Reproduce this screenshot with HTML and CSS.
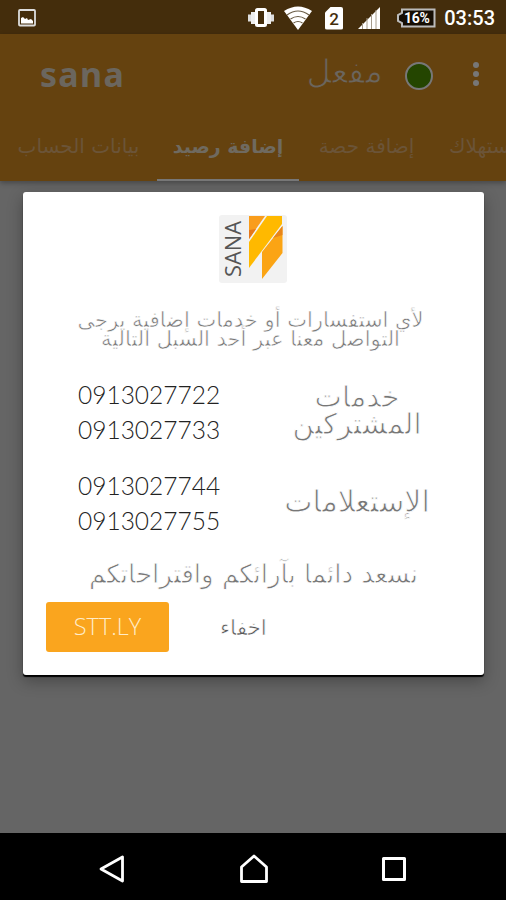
FILE: index.html
```html
<!DOCTYPE html>
<html lang="ar">
<head>
    <meta charset="UTF-8">
    <meta name="viewport" content="width=device-width, initial-scale=1.0">
    <title>sana</title>
    <link rel="stylesheet" href="styles.css">
</head>
<body>
    <div class="status-bar">
        <svg class="icon-picture" width="20" height="20" viewBox="0 0 20 20">
            <rect x="2" y="2" width="16" height="15.5" rx="1" fill="none" stroke="#ddd" stroke-width="1.8"/>
            <path d="M4 15.500V10l2-1 2 2 2-1 1 2 3-1 2 2v2.500z" fill="#fff"/>
        </svg>
        <svg width="28" height="20" viewBox="0 0 28 20">
            <rect x="9.500" y="1.500" width="9" height="16" rx="1" fill="none" stroke="#fff" stroke-width="3"/>
            <path d="M6 4v12M22 4v12" stroke="#eee" stroke-width="4"/>
            <path d="M2.500 6.500v7M25.500 6.500v7" stroke="#ddd" stroke-width="3"/>
        </svg>
        <svg class="icon-wifi" width="28" height="24" viewBox="0 0 28 24">
            <path d="M0 5Q14-4 28 5L14 24z" fill="#fff"/>
            <path d="M3 9Q14 1 25 9M6.500 13Q14 8 21.500 13M9.500 17Q14 14 18.500 17" fill="none" stroke="#685b45" stroke-width="1.100"/>
        </svg>
        <span class="sim">2</span>
        <svg class="icon-signal" width="22" height="22" viewBox="0 0 22 22">
            <path d="M0 22L22 0v22z" fill="#fff"/>
            <path d="M4.500 16v6M9 11v11M13.500 7v15M18 3v19" stroke="#a59c8c" stroke-width="1"/>
        </svg>
        <div class="battery">
            <svg width="40" height="20" viewBox="0 0 40 20">
                <path d="M6 1.500h32.500v17H6V15L2 13V7l4-2z" fill="#160e04" stroke="#bbb" stroke-width="2"/>
            </svg>
            <span>16%</span>
        </div>
        <div class="clock">03:53</div>
    </div>

    <div class="app-bar">
        <div class="toolbar">
            <h1 class="title">sana</h1>
            <span class="state" dir="rtl">مفعل</span>
            <span class="dot"></span>
            <span class="menu"><i></i><i></i><i></i></span>
        </div>
        <div class="tabs">
            <div class="tab tab-account"><span dir="rtl">بيانات الحساب</span></div>
            <div class="tab tab-balance active"><span dir="rtl">إضافة رصيد</span></div>
            <div class="tab tab-quota"><span dir="rtl">إضافة حصة</span></div>
            <div class="tab tab-usage"><span dir="rtl">استهلاك</span></div>
        </div>
    </div>

    <div class="content">
        <div class="dialog">
            <svg class="logo" width="68" height="68" viewBox="0 0 68 68">
                <rect width="68" height="68" rx="3" fill="#f2f2f2"/>
                <path d="M30 1h16L30 24z" fill="#f99d1c"/>
                <path d="M30 15v9l7-10z" fill="#e5781c"/>
                <path d="M48 1h15v8L30 53V27z" fill="#ffb900"/>
                <path d="M63.500 11v27L43 64V37z" fill="#fba414"/>
                <path d="M63.500 11v9L54 23z" fill="#e88518"/>
                <text class="logo-text" transform="translate(22 62) rotate(-90)" textLength="56" lengthAdjust="spacingAndGlyphs">SANA</text>
            </svg>
            <p class="message" dir="rtl">
                <span>لأي استفسارات أو خدمات إضافية يرجى</span><br>
                <span>التواصل معنا عبر أحد السبل التالية</span>
            </p>
            <div class="contact">
                <div class="phones">0913027722<br>0913027733</div>
                <div class="label label-services" dir="rtl"><span>خدمات</span><br><span>المشتركين</span></div>
            </div>
            <div class="contact contact-info">
                <div class="phones">0913027744<br>0913027755</div>
                <div class="label" dir="rtl"><span>الإستعلامات</span></div>
            </div>
            <p class="thanks" dir="rtl"><span>نسعد دائما بآرائكم واقتراحاتكم</span></p>
            <div class="actions">
                <button class="site-btn">STT.LY</button>
                <button class="hide-btn" dir="rtl">اخفاء</button>
            </div>
        </div>
    </div>

    <div class="nav-bar">
        <svg width="28" height="30" viewBox="0 0 28 30">
            <path d="M24.500 3v24L3 15z" fill="none" stroke="#fff" stroke-width="2.800" stroke-linejoin="round"/>
        </svg>
        <svg width="30" height="30" viewBox="0 0 30 30">
            <path d="M2.500 27.500V13L15 2l12.500 11v14.500z" fill="none" stroke="#fff" stroke-width="2.800" stroke-linejoin="round"/>
        </svg>
        <svg width="26" height="26" viewBox="0 0 26 26">
            <rect x="2.500" y="2.500" width="21" height="21" fill="none" stroke="#fff" stroke-width="3" stroke-linejoin="round"/>
        </svg>
    </div>
</body>
</html>
```
FILE: styles.css
```css
* {
    margin: 0;
    padding: 0;
    box-sizing: border-box;
}

body {
    width: 506px;
    height: 900px;
    display: flex;
    flex-direction: column;
    overflow: hidden;
    background: #656565;
    font-family: "DejaVu Sans", sans-serif;
}

svg {
    display: block;
    flex: none;
}

span {
    white-space: nowrap;
}

/* status bar */
.status-bar {
    height: 34px;
    flex: none;
    display: flex;
    align-items: center;
    padding: 2px 11px 0 17px;
    background: #442d0c;
    color: #fff;
    font-family: Roboto, sans-serif;
}

.icon-picture {
    margin-right: 210px;
}

.icon-wifi {
    margin-left: 9px;
}

.sim {
    width: 18px;
    height: 23px;
    margin-left: 13px;
    background: #fff;
    border-radius: 2px;
    clip-path: polygon(6px 0, 100% 0, 100% 100%, 0 100%, 0 6px);
    color: #442d0c;
    font-size: 17px;
    font-weight: 500;
    line-height: 24px;
    text-align: center;
}

.icon-signal {
    margin-left: 15px;
}

.battery {
    display: grid;
    margin-left: 16px;
    font-size: 14px;
    font-weight: 700;
    line-height: 20px;
}

.battery svg,
.battery span {
    grid-area: 1 / 1;
}

.battery span {
    padding-left: 8px;
    letter-spacing: -0.3px;
}

.clock {
    margin-left: auto;
    font-size: 20px;
    font-weight: 500;
}

/* app bar */
.app-bar {
    height: 147px;
    flex: none;
    background: #65420f;
    color: #6b665e;
    box-shadow: 0 2px 5px rgba(0, 0, 0, 0.3);
}

.toolbar {
    height: 83px;
    display: flex;
    align-items: center;
    padding: 0 25px 0 40px;
}

.title {
    width: 267px;
    font: 700 34px "Noto Sans", sans-serif;
    letter-spacing: 1.3px;
    line-height: 40px;
    padding-bottom: 3px;
}

.state {
    width: 76px;
    font-size: 33.5px;
    line-height: 40px;
    padding-bottom: 8px;
    -webkit-text-stroke: 1px #65420f;
}

.dot {
    width: 28px;
    height: 28px;
    margin: 1px 0 0 22px;
    border: 2px solid #777;
    border-radius: 50%;
    background: #244500;
}

.menu {
    margin-left: auto;
    margin-right: 2px;
    margin-bottom: 4px;
    display: flex;
    flex-direction: column;
    gap: 3px;
}

.menu i {
    width: 6px;
    height: 6px;
    border-radius: 50%;
    background: #777;
}

.tabs {
    height: 64px;
    display: flex;
    overflow: hidden;
}

.tab {
    flex: none;
    display: flex;
    justify-content: center;
    font-size: 20px;
    line-height: 58px;
    color: #6b5438;
}

.tab-account {
    width: 157px;
}

.tab-balance {
    width: 142px;
}

.tab-quota {
    width: 135px;
}

.tab-usage {
    padding-left: 15px;
}

.tab.active {
    color: #6f6a60;
    font-size: 19px;
    font-weight: 700;
    border-bottom: 2px solid #777;
}

/* dialog */
.content {
    flex: 1;
    padding: 11px 22px 0 23px;
}

.dialog {
    height: 483px;
    padding-top: 23px;
    background: #fff;
    border-radius: 3px;
    box-shadow: 0 2px 1px #000, 0 6px 16px rgba(0, 0, 0, 0.3);
    color: #777;
}

.logo {
    margin: 0 198px 0 196px;
}

.logo-text {
    font: 22px "Open Sans", sans-serif;
    fill: #555;
}

.message {
    margin-top: 28px;
    margin-right: 6px;
    text-align: center;
    font-size: 21px;
    line-height: 19px;
    color: #777;
    -webkit-text-stroke: 0.6px #fff;
}

.contact {
    height: 91px;
    margin-top: 28px;
    display: flex;
    padding-left: 55px;
}

.phones {
    width: 204px;
    font: 300 24.5px "Lato", sans-serif;
    line-height: 35px;
    color: #222;
}

.label {
    width: 150px;
    text-align: center;
    font-size: 30px;
    line-height: 27px;
    padding-top: 20px;
    -webkit-text-stroke: 0.9px #fff;
}

.label-services {
    font-size: 29px;
    padding-top: 7px;
}

.contact-info {
    margin-top: 0;
}

.thanks {
    text-align: center;
    font-size: 26px;
    line-height: 30px;
    -webkit-text-stroke: 0.8px #fff;
}

.actions {
    display: flex;
    align-items: center;
    margin-top: 13px;
    padding-left: 23px;
}

button {
    border: none;
    background: none;
    font-family: inherit;
}

.site-btn {
    width: 123px;
    height: 50px;
    padding-bottom: 3px;
    border-radius: 3px;
    background: #faa51e;
    color: #ffecc8;
    font: 300 23.5px "Open Sans", sans-serif;
}

.hide-btn {
    margin-left: 51px;
    color: #555;
    font-size: 21.5px;
    -webkit-text-stroke: 0.6px #fff;
}

/* navigation bar */
.nav-bar {
    height: 67px;
    flex: none;
    display: flex;
    align-items: center;
    justify-content: space-between;
    padding: 4px 99px 0 98px;
    background: #000;
}
```
